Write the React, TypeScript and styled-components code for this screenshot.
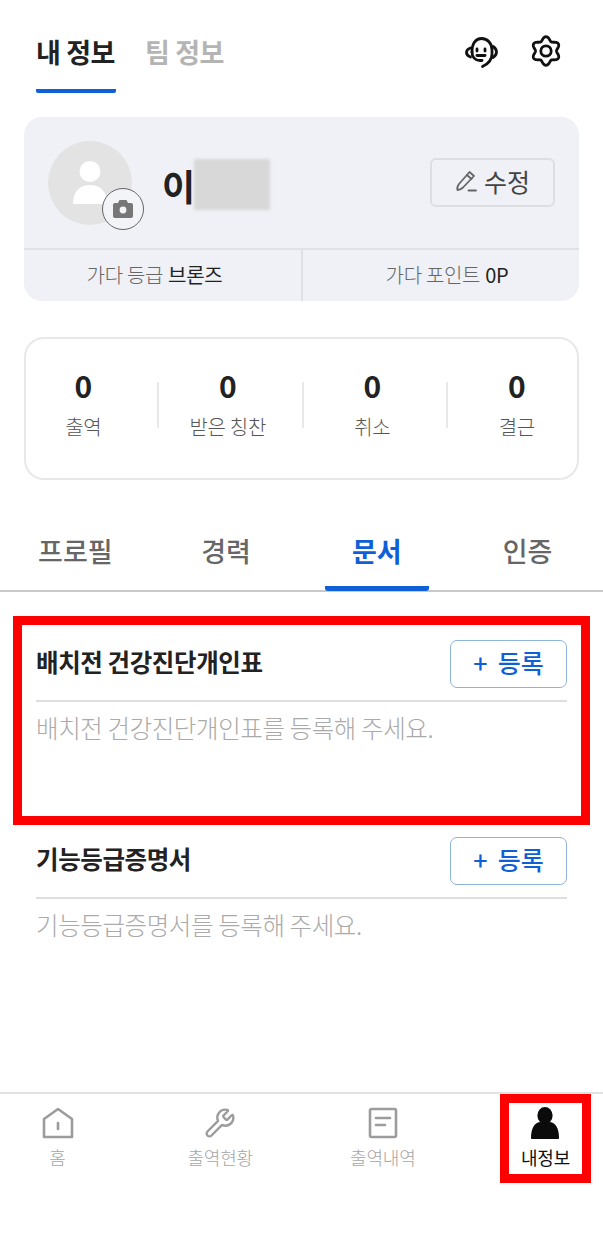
import { Wrench } from 'lucide-react';
import styled, { createGlobalStyle } from 'styled-components';

const GlobalStyle = createGlobalStyle`
    html, body {
        margin: 0;
        padding: 0;
        background: #fff;
    }
    * {
        box-sizing: border-box;
    }
    body {
        font-family: "Noto Sans CJK KR", "Noto Sans", sans-serif;
    }
`

const Page = styled.div`
    width: 603px;
    height: 1233px;
    display: flex;
    flex-direction: column;
    overflow: hidden;
`

const Main = styled.div`
    flex: 1;
`

const Header = styled.div`
    height: 93px;
    padding: 0 24px 0 36px;
    display: flex;
    justify-content: space-between;
    align-items: flex-end;
`

const HeaderTabs = styled.div`
    display: flex;
    gap: 29px;
`

const HeaderTab = styled.div<{ $active?: boolean }>`
    height: 93px;
    padding-top: 32px;
    width: 80px;
    white-space: nowrap;
    font-size: 27px;
    line-height: 40px;
    font-weight: 700;
    letter-spacing: -0.4px;
    color: ${p => p.$active ? '#222' : '#b4b4b4'};
    border-bottom: 4px solid ${p => p.$active ? '#0f5fd7' : 'transparent'};
    border-radius: 0 0 2px 2px;
`

const HeaderIcons = styled.div`
    height: 93px;
    padding: 35px 17px 0 0;
    display: flex;
    align-items: flex-start;
    gap: 32px;
`

const ProfileCard = styled.div`
    margin: 24px 24px 0;
    height: 184px;
    background: #eff1f6;
    border-radius: 18px;
    display: flex;
    flex-direction: column;
`

const ProfileTop = styled.div`
    height: 133px;
    padding: 24px 24px 0;
    display: flex;
    align-items: flex-start;
    border-bottom: 2px solid #e0e1e4;
`

const Avatar = styled.div`
    position: relative;
    width: 84px;
    height: 84px;
    flex: none;
    border-radius: 50%;
    background: #e3e3e3;
    display: flex;
    align-items: center;
    justify-content: center;
`

const CameraBadge = styled.div`
    position: absolute;
    left: 54px;
    top: 47px;
    width: 42px;
    height: 42px;
    border-radius: 50%;
    background: #f3f4f7;
    border: 1.5px solid #666;
    display: flex;
    align-items: center;
    justify-content: center;
`

const NameRow = styled.div`
    margin: 18px 0 0 30px;
    display: flex;
    align-items: center;
    flex: 1;
`

const Name = styled.span`
    font-size: 36px;
    line-height: 40px;
    font-weight: 700;
    color: #222;
`

const NameBlur = styled.span`
    width: 76px;
    height: 51px;
    margin-left: -1px;
    background: #d8d8d8;
    filter: blur(1.5px);
`

const EditButton = styled.button`
    margin-top: 17px;
    width: 125px;
    height: 49px;
    padding: 0 0 3px;
    background: transparent;
    border: 2px solid #dddee1;
    border-radius: 6px;
    display: flex;
    align-items: center;
    justify-content: center;
    gap: 7px;
    font-family: inherit;
    font-size: 25px;
    color: #444;
`

const GradeRow = styled.div`
    flex: 1;
    display: grid;
    grid-template-columns: 277px 1fr;
`

const GradeCell = styled.div<{ $divided?: boolean }>`
    display: flex;
    align-items: center;
    justify-content: center;
    gap: 5px;
    padding: ${p => p.$divided ? '0 0 2px 12px' : '0 16px 2px 0'};
    font-size: 20px;
    font-weight: 300;
    letter-spacing: -0.3px;
    color: #666;
    ${p => p.$divided ? 'border-left: 2px solid #e0e1e4;' : ''}
`

const GradeValue = styled.span`
    font-weight: 400;
    color: #222;
`

const StatsCard = styled.div`
    margin: 36px 24px 0;
    height: 143px;
    padding-top: 28px;
    border: 2px solid #e8e8e8;
    border-radius: 20px;
    display: grid;
    grid-template-columns: 131px repeat(3, 144.5px);
    align-items: flex-start;
    overflow: hidden;
`

const Stat = styled.div<{ $divided?: boolean; $first?: boolean }>`
    position: relative;
    margin-left: ${p => p.$first ? '-13.5px' : '0'};
    width: 144.5px;
    padding-right: 3px;
    display: flex;
    flex-direction: column;
    align-items: center;
    gap: 12px;
    ${p => p.$divided ? `
        &::before {
            content: '';
            position: absolute;
            left: 0;
            top: 15px;
            width: 2px;
            height: 46px;
            background: #e8e8e8;
        }
    ` : ''}
`

const StatNumber = styled.div`
    font-size: 30px;
    line-height: 36px;
    font-weight: 700;
    color: #222;
`

const StatLabel = styled.div`
    font-size: 20px;
    line-height: 24px;
    font-weight: 300;
    letter-spacing: -0.3px;
    color: #555;
    white-space: nowrap;
`

const TabBar = styled.div`
    margin-top: 36px;
    height: 76px;
    display: grid;
    grid-template-columns: repeat(4, 1fr);
    border-bottom: 2px solid #c9c9c9;
`

const Tab = styled.div<{ $active?: boolean }>`
    width: 104px;
    height: 75px;
    justify-self: center;
    padding-top: 15px;
    text-align: center;
    white-space: nowrap;
    font-size: 27px;
    line-height: 40px;
    font-weight: ${p => p.$active ? 700 : 500};
    color: ${p => p.$active ? '#0f5fd7' : '#666'};
    border-bottom: 5px solid ${p => p.$active ? '#0f5fd7' : 'transparent'};
    border-radius: 0 0 3px 3px;
`

const Documents = styled.div`
    padding-top: 33px;
`

const DocSection = styled.div<{ $highlight?: boolean }>`
    margin: 0 22px 6px;
    height: 191px;
    padding: 16px 14px 0;
    ${p => p.$highlight ? 'outline: 9px solid #ff0000;' : ''}
`

const DocHeader = styled.div`
    height: 61px;
    padding-bottom: 13px;
    display: flex;
    align-items: center;
    justify-content: space-between;
    border-bottom: 2px solid #dedede;
`

const DocTitle = styled.div`
    font-size: 24.5px;
    line-height: 30px;
    font-weight: 700;
    letter-spacing: -0.4px;
    color: #222;
    margin-bottom: 4px;
`

const AddButton = styled.button`
    width: 117px;
    height: 48px;
    padding: 0 0 5px;
    background: #fff;
    border: 1.5px solid #8fb4dc;
    border-radius: 7px;
    display: flex;
    align-items: center;
    justify-content: center;
    gap: 10px;
    font-family: inherit;
    font-size: 25px;
    font-weight: 500;
    color: #0f5fd7;
`

const DocHint = styled.div`
    margin-top: 10px;
    font-size: 24.5px;
    line-height: 32px;
    font-weight: 300;
    letter-spacing: -0.4px;
    color: #aaa;
`

const BottomNav = styled.div`
    height: 141px;
    padding: 9px 21px 0;
    border-top: 2px solid #e2e2e2;
    display: flex;
    justify-content: space-between;
    align-items: flex-start;
`

const NavItem = styled.div<{ $active?: boolean }>`
    width: 73px;
    height: 71px;
    padding-top: 5px;
    display: flex;
    flex-direction: column;
    align-items: center;
    gap: 7px;
    white-space: nowrap;
    font-size: 18px;
    line-height: 24px;
    letter-spacing: -0.2px;
    font-weight: ${p => p.$active ? 400 : 300};
    color: ${p => p.$active ? '#111' : '#a5a5a5'};
    ${p => p.$active ? 'outline: 9px solid #ff0000;' : ''}
`

const NavIcon = styled.div`
    width: 32px;
    height: 30px;
    display: flex;
    align-items: center;
    justify-content: center;
`

const gearPath = () => {
    const pts: string[] = []
    for (let i = 0; i < 120; i++) {
        const a = (i / 120) * Math.PI * 2
        const r = 12.4 + 1.9 * Math.cos(6 * a)
        const x = 16 + r * Math.sin(a)
        const y = 16 - r * Math.cos(a)
        pts.push(`${i === 0 ? 'M' : 'L'}${x.toFixed(2)} ${y.toFixed(2)}`)
    }
    return pts.join(' ') + ' Z'
}

const HeadsetIcon = () => (
    <svg width="34" height="34" viewBox="0 0 34 34" fill="none" stroke="#111" strokeWidth="2.8" strokeLinecap="round" strokeLinejoin="round">
        <path d="M8 17 C8 8 12 3.5 17.5 3.5 C23.5 3.5 28 8.5 28 15 V19 C28 25 24 29 18.5 31.5" />
        <path d="M8 17 C8 22 11 25.5 16 25.5 H18" />
        <path d="M6.5 13 C3.5 14 2.5 16 2.5 17.5 C2.5 19 3.5 21 6.5 22" />
        <path d="M29 11.5 C31.5 13 32.5 15 32.5 17 C32.5 19 31.5 21 29 22.5" />
        <path d="M13 14 V16" />
        <path d="M21 14 V16" />
        <path d="M13 20.5 H21" />
    </svg>
)

const GearIcon = () => (
    <svg width="32" height="32" viewBox="0 0 32 32" fill="none" stroke="#111" strokeWidth="2.8" strokeLinejoin="round">
        <path d={gearPath()} />
        <circle cx="16" cy="16" r="5.2" />
    </svg>
)

const PersonPlaceholder = () => (
    <svg width="34" height="44" viewBox="0 0 34 44" fill="#fff">
        <circle cx="17" cy="10.5" r="10.5" />
        <path d="M0 43 C0 30 7 24 17 24 C27 24 34 30 34 43 Z" />
    </svg>
)

const CameraIcon = () => (
    <svg width="22" height="20" viewBox="0 0 22 20">
        <path fill="#777" d="M7.5 1 H14.5 L16 4 H19 C20.2 4 21 4.8 21 6 V17 C21 18.2 20.2 19 19 19 H3 C1.8 19 1 18.2 1 17 V6 C1 4.8 1.8 4 3 4 H6 Z" />
        <circle cx="11" cy="11" r="3.4" fill="#f3f4f7" />
    </svg>
)

const PencilIcon = () => (
    <svg width="22" height="22" viewBox="0 0 22 22" fill="none" stroke="#666" strokeWidth="1.8" strokeLinecap="round" strokeLinejoin="round">
        <path d="M14.5 2 L19 6 L8 17.5 C6.5 19 4 20 2.5 20 C2 18.5 2.5 16 4 14 Z" />
        <path d="M12 5 L16.5 9" />
        <path d="M13.5 20.5 H21" />
    </svg>
)

const HomeIcon = () => (
    <svg width="32" height="32" viewBox="0 0 32 32" fill="none" stroke="#9c9c9c" strokeWidth="2.6" strokeLinejoin="round" strokeLinecap="round">
        <path d="M16 2 L30 12 V30 H2 V12 Z" />
        <path d="M16 16 V22" />
    </svg>
)

const DocumentIcon = () => (
    <svg width="30" height="32" viewBox="0 0 30 32" fill="none" stroke="#9c9c9c" strokeWidth="2.6" strokeLinejoin="round" strokeLinecap="round">
        <rect x="2" y="2" width="26" height="28" rx="1.5" />
        <path d="M8 11 H22" />
        <path d="M8 18 H17" />
    </svg>
)

const PersonIcon = () => (
    <svg width="30" height="32" viewBox="0 0 30 32" fill="#0b0b0b">
        <ellipse cx="15" cy="8.5" rx="7.6" ry="8.5" />
        <path d="M1 31 C1 22 4 15 11 15 H19 C26 15 29 22 29 31 C29 31.6 28.6 32 28 32 H2 C1.4 32 1 31.6 1 31 Z" />
    </svg>
)

const stats = [
    { value: 0, label: '출역' },
    { value: 0, label: '받은 칭찬' },
    { value: 0, label: '취소' },
    { value: 0, label: '결근' },
]

const tabs = ['프로필', '경력', '문서', '인증']

const docs = [
    { title: '배치전 건강진단개인표', hint: '배치전 건강진단개인표를 등록해 주세요.', highlight: true },
    { title: '기능등급증명서', hint: '기능등급증명서를 등록해 주세요.', highlight: false },
]

export default function App() {
    return (
        <Page>
            <GlobalStyle />
            <Main>
                <Header>
                    <HeaderTabs>
                        <HeaderTab $active>내 정보</HeaderTab>
                        <HeaderTab>팀 정보</HeaderTab>
                    </HeaderTabs>
                    <HeaderIcons>
                        <HeadsetIcon />
                        <GearIcon />
                    </HeaderIcons>
                </Header>

                <ProfileCard>
                    <ProfileTop>
                        <Avatar>
                            <PersonPlaceholder />
                            <CameraBadge>
                                <CameraIcon />
                            </CameraBadge>
                        </Avatar>
                        <NameRow>
                            <Name>이</Name>
                            <NameBlur />
                        </NameRow>
                        <EditButton>
                            <PencilIcon />
                            수정
                        </EditButton>
                    </ProfileTop>
                    <GradeRow>
                        <GradeCell>가다 등급 <GradeValue>브론즈</GradeValue></GradeCell>
                        <GradeCell $divided>가다 포인트 <GradeValue>0P</GradeValue></GradeCell>
                    </GradeRow>
                </ProfileCard>

                <StatsCard>
                    {stats.map((s, i) => (
                        <Stat key={s.label} $divided={i > 0} $first={i === 0}>
                            <StatNumber>{s.value}</StatNumber>
                            <StatLabel>{s.label}</StatLabel>
                        </Stat>
                    ))}
                </StatsCard>

                <TabBar>
                    {tabs.map(t => (
                        <Tab key={t} $active={t === '문서'}>{t}</Tab>
                    ))}
                </TabBar>

                <Documents>
                    {docs.map(d => (
                        <DocSection key={d.title} $highlight={d.highlight}>
                            <DocHeader>
                                <DocTitle>{d.title}</DocTitle>
                                <AddButton>+ <span>등록</span></AddButton>
                            </DocHeader>
                            <DocHint>{d.hint}</DocHint>
                        </DocSection>
                    ))}
                </Documents>
            </Main>

            <BottomNav>
                <NavItem>
                    <NavIcon><HomeIcon /></NavIcon>
                    홈
                </NavItem>
                <NavItem>
                    <NavIcon><Wrench size={34} color="#9c9c9c" strokeWidth={1.8} /></NavIcon>
                    출역현황
                </NavItem>
                <NavItem>
                    <NavIcon><DocumentIcon /></NavIcon>
                    출역내역
                </NavItem>
                <NavItem $active>
                    <NavIcon><PersonIcon /></NavIcon>
                    내정보
                </NavItem>
            </BottomNav>
        </Page>
    )
}
